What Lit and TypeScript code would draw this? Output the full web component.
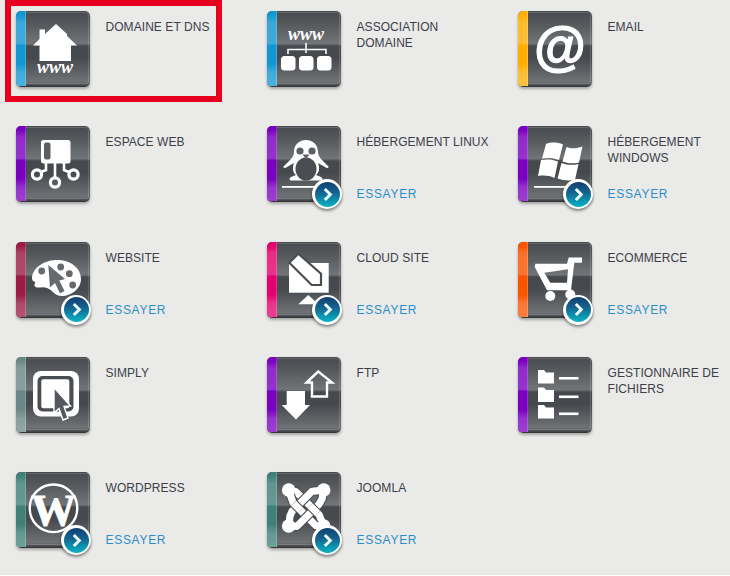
import { LitElement, html, css, svg } from "lit";
import { customElement } from "lit/decorators.js";

const DARK = "#4a4e52";

const www = (x: number, y: number, size = 18) =>
  svg`<text x="${x}" y="${y}" text-anchor="middle" font-family="'Liberation Serif',serif" font-style="italic" font-weight="700" font-size="${size}" fill="#fff">www</text>`;

const jBand = (d: string, cap = "round") =>
  svg`<path stroke="${DARK}" stroke-width="9.4" stroke-linecap="butt" d="${d}"/><path stroke="#fff" stroke-width="7.2" stroke-linecap="${cap}" d="${d}"/>`;

const icons: Record<string, unknown> = {
  house: svg`<path fill="#fff" d="M40 13L51 23V25L61 34.5H55V50H23.5V34.5H17L23.5 28V18.5H29V23Z"/>${www(39, 62)}`,
  assoc: svg`${www(39, 29)}
    <path fill="none" stroke="#fff" stroke-width="1.6" d="M21 43V38.5H59V43M39 32V42"/>
    <g fill="#fff"><rect x="14" y="45" width="14.5" height="14.5" rx="3.5"/><rect x="32" y="45" width="14.5" height="14.5" rx="3.5"/><rect x="50" y="45" width="14.5" height="14.5" rx="3.5"/></g>`,
  at: svg`<text x="41" y="54" text-anchor="middle" font-family="'Liberation Sans',sans-serif" font-style="italic" font-weight="700" font-size="53" fill="#fff" stroke="#fff" stroke-width="1.2">@</text>`,
  web: svg`<rect x="25" y="14" width="29.5" height="23.5" rx="2.5" fill="#fff"/><rect x="28" y="16.5" width="6.5" height="17" rx="2" fill="#5b5f63"/>
    <path fill="none" stroke="#fff" stroke-width="2.6" d="M30 37V44L25 46M39 37V51M48 37V44L53 46"/>
    <g fill="none" stroke="#fff" stroke-width="3.2"><circle cx="21" cy="48.5" r="4.6"/><circle cx="39" cy="56.5" r="4.6"/><circle cx="57.5" cy="48.5" r="4.6"/></g>`,
  linux: svg`<path fill="#fff" d="M27 26C27 10 51 10 51 26C51 28 52 31 54 33L61.5 40.5C62 42 60 42.5 58 41L51 37C53 42 52 47 49 49L54 51C56 52 56 54 54 54.5H24C22 54 22 52 24 51L29 49C26 47 25 42 27 37L20 41C18 42.5 16 42 16.5 40.5L24 33C26 31 27 28 27 26Z"/>
    <ellipse cx="39" cy="43" rx="10.5" ry="11.5" fill="${DARK}"/><circle cx="33" cy="25" r="3.6" fill="#5c6064"/><circle cx="45" cy="25" r="3.6" fill="#5c6064"/>
    <path d="M35.5 28.5H42.5L39 33Z" fill="#5c6064"/><rect x="15" y="60" width="40" height="1.8" fill="#fff"/>`,
  windows: svg`<g fill="#fff"><path d="M28 18C33 16 39 16 45 18.5L41 34C35 31.5 30 31.5 24 32.5Z"/><path d="M48.5 21C53 23 59 22.5 64.5 20.5L61 36.5C56 38 50 37.5 44.5 35.5Z"/><path d="M23 34C29 33 34 33 40 35.5L36.5 52C31 49.5 26 49 20 50Z"/><path d="M43.5 37C49 39 55 39.5 60.5 38L57 54C51 55 45 54.5 39.5 52.5Z"/></g><rect x="16" y="60" width="40" height="1.8" fill="#fff"/>`,
  palette: svg`<path fill="#fff" d="M16 35C18 23 32 17 44 18C56 19 65 27 65 37C65 47 55 54 46 54C38 54 37 48 31 46C26 44 21 47 19 44.5C17 42.5 21 40 18 39.5C16 39 16 37 16 35Z"/>
    <g fill="#666a6e"><circle cx="25.7" cy="29" r="3.4"/><circle cx="44.7" cy="25" r="3.4"/><circle cx="53.3" cy="31.7" r="3.4"/><circle cx="56.7" cy="43" r="3.4"/><path d="M32.3 23L34 45.5L39 41L44 51.5L48.5 49L43.3 38.5L49 37Z"/></g>`,
  cloud: svg`<rect x="22" y="21" width="39.7" height="29.7" fill="#fff"/><path d="M31.3 11.7L22.3 20.7L44.7 43H54V31.7Z" fill="#fff" stroke="${DARK}" stroke-width="2.2"/><path d="M31.3 62.3L41.3 53L51.3 62.3Z" fill="#fff"/>`,
  cart: svg`<path fill="#fff" fill-rule="evenodd" d="M64 15.5V20.7H56.3L53 48.3H29L16.7 25L17.3 21.7H49L50.7 15.5ZM26.3 30.7L32.3 40.7H49L50 27.3Z"/><circle cx="32.3" cy="54" r="5" fill="#fff"/><circle cx="52.3" cy="52.5" r="5" fill="#fff"/>`,
  simply: svg`<rect x="17" y="14" width="46" height="45.5" rx="8" fill="#fff"/><rect x="21.5" y="19" width="36" height="35.5" rx="5" fill="${DARK}"/><rect x="25.3" y="22.3" width="28" height="29" rx="2" fill="#fff"/>
    <path d="M38 30.5V56L43 51.5L47 63L52 61L48 49.5L54.5 49Z" fill="#55595d" stroke="#fff" stroke-width="1.4"/>`,
  ftp: svg`<path d="M51.3 14.5L39.5 25.5H45V39.5H60V25.5H65Z" fill="none" stroke="#fff" stroke-width="2.4"/><path fill="#fff" d="M19.7 34H38V48H43L29 62.5L14.7 48H19.7Z"/>`,
  files: svg`<g fill="#fff"><path d="M20 13H26L28 15.5H36V26.5H20Z"/><path d="M20 30.5H26L28 33H36V45H20Z"/><path d="M20 48H26L28 50.5H36V61.5H20Z"/><rect x="41" y="20" width="19.5" height="2.6"/><rect x="41" y="38.5" width="19.5" height="2.6"/><rect x="41" y="55.5" width="19.5" height="2.6"/></g>`,
  wp: svg`<circle cx="37.5" cy="36.3" r="23.8" fill="none" stroke="#fff" stroke-width="2.4"/><text x="37.5" y="53" text-anchor="middle" font-family="'Liberation Serif',serif" font-weight="700" font-size="45" fill="#fff" stroke="#fff" stroke-width="0.9">W</text>`,
  joomla: svg`<g fill="none" stroke-linejoin="round">
      ${jBand("M21.7 18L29 19.7L52 42.7L56.7 54")}
      ${jBand("M56.7 54L49 53.7L26 30.7L21.7 18")}
      ${jBand("M21.7 54L23 44L25 39.3L45 19.3L56.7 18")}
      ${jBand("M56.7 18L55 27L52 32.3L30 54.3L21.7 54")}
      ${jBand("M43 33.7L50.5 41.2", "butt")}
      ${jBand("M26.5 31.2L33.5 38.2", "butt")}
    </g>
    <g fill="#fff"><circle cx="21.7" cy="18" r="6.8"/><circle cx="56.7" cy="18" r="6.8"/><circle cx="21.7" cy="54" r="6.8"/><circle cx="56.7" cy="54" r="6.8"/></g>`,
};

interface Item { name: string; icon: string; color: string; tryIt?: boolean }

const items: Item[] = [
  { name: "DOMAINE ET DNS", icon: "house", color: "#1196d1" },
  { name: "ASSOCIATION DOMAINE", icon: "assoc", color: "#1196d1" },
  { name: "EMAIL", icon: "at", color: "#ffae00" },
  { name: "ESPACE WEB", icon: "web", color: "#7a00c0" },
  { name: "HÉBERGEMENT LINUX", icon: "linux", color: "#7a00c0", tryIt: true },
  { name: "HÉBERGEMENT WINDOWS", icon: "windows", color: "#7a00c0", tryIt: true },
  { name: "WEBSITE", icon: "palette", color: "#9a1c44", tryIt: true },
  { name: "CLOUD SITE", icon: "cloud", color: "#e5006f", tryIt: true },
  { name: "ECOMMERCE", icon: "cart", color: "#f95400", tryIt: true },
  { name: "SIMPLY", icon: "simply", color: "#6c8787" },
  { name: "FTP", icon: "ftp", color: "#7a00c0" },
  { name: "GESTIONNAIRE DE FICHIERS", icon: "files", color: "#7a00c0" },
  { name: "WORDPRESS", icon: "wp", color: "#3f8078", tryIt: true },
  { name: "JOOMLA", icon: "joomla", color: "#3f8078", tryIt: true },
];

@customElement("app-root")
export class AppRoot extends LitElement {
  static styles = css`
    :host {
      display: block;
      position: relative;
      height: 575px;
      overflow: hidden;
      background: #eaeae8;
      font-family: "Liberation Sans", Arial, sans-serif;
    }
    .grid {
      display: grid;
      grid-template-columns: 251px 251px 1fr;
      grid-auto-rows: 115.25px;
      padding: 11px 0 0 16px;
    }
    .card { display: flex; gap: 15.5px; align-items: flex-start; }
    .tile {
      position: relative;
      flex: none;
      width: 74px;
      height: 76px;
      border-radius: 5px;
      background: linear-gradient(180deg, #46494d 0%, #595c5f 20%, #727578 43%, #45494d 46%, #46494d 62%, #6f7275 93%, #5a5d60 96%, #2d2f31 100%);
      box-shadow: 0 2px 3px rgba(0, 0, 0, 0.3);
      overflow: hidden;
    }
    .stripe {
      position: absolute;
      left: 0;
      top: 0;
      bottom: 1px;
      width: 10px;
      background: var(--c);
    }
    .stripe::before {
      content: "";
      position: absolute;
      inset: 0;
      background: linear-gradient(180deg, rgba(255,255,255,0) 5%, rgba(255,255,255,0.17) 15%, rgba(255,255,255,0.2) 43%, rgba(255,255,255,0) 46%, rgba(255,255,255,0) 70%, rgba(255,255,255,0.2) 82%, rgba(255,255,255,0.24) 96%);
    }
    .stripe::after {
      content: "";
      position: absolute;
      right: 0;
      top: 0;
      bottom: 0;
      width: 1px;
      background: rgba(255, 255, 255, 0.2);
    }
    .frame {
      position: absolute;
      left: 10px;
      right: 1px;
      top: 1px;
      bottom: 3px;
      border: 1px solid rgba(255, 255, 255, 0.16);
      border-left: 0;
      border-radius: 0 3px 3px 0;
    }
    .tile svg { position: absolute; left: 0; top: 0; }
    .wrap { position: relative; flex: none; width: 74px; height: 76px; }
    .badge {
      position: absolute;
      left: 45px;
      top: 53px;
      width: 30px;
      height: 30px;
      border-radius: 50%;
      background: #fff;
      box-shadow: 0 2px 3px rgba(0, 0, 0, 0.45);
      display: flex;
      align-items: center;
      justify-content: center;
    }
    .badge-in {
      width: 25px;
      height: 25px;
      border-radius: 50%;
      background: linear-gradient(180deg, #114070 0%, #15608c 40%, #0a9bb4 80%, #12b0c4 100%);
      display: flex;
      align-items: center;
      justify-content: center;
    }
    .text {
      display: flex;
      flex-direction: column;
      height: 76px;
      width: 135px;
      box-sizing: border-box;
      padding-top: 8px;
      font-size: 12px;
      line-height: 16px;
      letter-spacing: 0.06px;
    }
    .name { color: #3b4048; }
    .link { margin-top: auto; color: #2a8fc8; text-decoration: none; letter-spacing: 0.7px; }
    .mark {
      position: absolute;
      left: 5px;
      top: 0;
      width: 217px;
      height: 102px;
      box-sizing: border-box;
      border: 6px solid #e60020;
    }
  `;

  private card(it: Item) {
    return html`<div class="card">
      <div class="wrap">
        <div class="tile">
          <span class="stripe" style="--c:${it.color}"></span>
          <span class="frame"></span>
          <svg width="74" height="76" viewBox="0 0 74 76">${icons[it.icon]}</svg>
        </div>
        ${it.tryIt
          ? html`<div class="badge"><div class="badge-in">
              <svg width="13" height="15" viewBox="0 0 13 15"><path d="M3.8 2L9.3 7.5L3.8 13" fill="none" stroke="#eafcff" stroke-width="3"/></svg>
            </div></div>`
          : null}
      </div>
      <div class="text">
        <span class="name">${it.name}</span>
        ${it.tryIt ? html`<a class="link" href="#">ESSAYER</a>` : null}
      </div>
    </div>`;
  }

  render() {
    return html`<div class="grid">${items.map((i) => this.card(i))}</div><div class="mark"></div>`;
  }
}
